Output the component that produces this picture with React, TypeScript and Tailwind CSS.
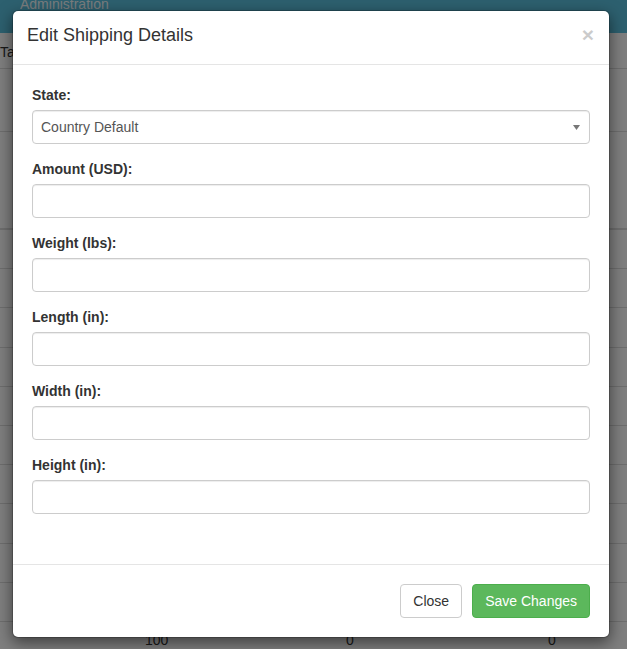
import React from "react";

const fields = ["Amount (USD):", "Weight (lbs):", "Length (in):", "Width (in):", "Height (in):"];

export default function App() {
  const rows = Array.from({ length: 10 });
  return (
    <div className="relative h-[649px] w-[627px] overflow-hidden bg-white font-['Liberation_Sans',Arial,sans-serif] text-[14px] leading-[20px] text-[#333]">
      {/* Underlying page */}
      <div className="flex h-[33px] items-start bg-[#5bc0de] pl-[20px]">
        <div className="-mt-[6px] text-white/95">Administration</div>
      </div>
      <div className="h-[36px] border-b border-[#dddddd] pt-[9px]">Tax Rates</div>
      <div className="h-[63px] border-b border-[#dddddd]" />
      <div className="h-[98px] border-b-2 border-[#dddddd]" />
      {rows.map((_, i) => (
        <div key={i} className="h-[39.2px] border-b border-[#dddddd]" />
      ))}
      <div className="grid grid-cols-[137px_201px_202px_1fr] pt-[8px]">
        <div />
        <div className="pl-[8px]">100</div>
        <div className="pl-[8px]">0</div>
        <div className="pl-[8px]">0</div>
      </div>

      {/* Backdrop */}
      <div className="absolute inset-0 bg-black/50" />

      {/* Modal */}
      <div className="absolute left-[12px] top-[10px] flex h-[628px] w-[598px] flex-col rounded-[6px] border border-black/20 bg-white bg-clip-padding shadow-[0_5px_15px_rgba(0,0,0,0.5)]">
        <div className="flex h-[54px] shrink-0 items-start justify-between border-b border-[#e5e5e5] pl-[14px] pr-[15px] pt-[12px]">
          <h4 className="text-[18px] font-normal leading-[25.7px] text-[#333]">Edit Shipping Details</h4>
          <span className="mt-[1px] text-[21px] font-bold leading-none text-black opacity-20">×</span>
        </div>

        <div className="h-[499px] shrink-0 px-[19px] pt-[20px]">
          <div className="mb-[15px]">
            <div className="mb-[5px] font-bold">State:</div>
            <div className="flex h-[34px] items-center justify-between rounded-[4px] border border-[#cccccc] pl-[8px] pr-[9px] text-[#555] shadow-[inset_0_1px_1px_rgba(0,0,0,0.075)]">
              <span>Country Default</span>
              <svg width="7" height="5" viewBox="0 0 7 5">
                <polygon points="0,0 7,0 3.5,5" fill="#777" />
              </svg>
            </div>
          </div>
          {fields.map((f) => (
            <div key={f} className="mb-[15px]">
              <div className="mb-[5px] font-bold">{f}</div>
              <div className="h-[34px] rounded-[4px] border border-[#cccccc] shadow-[inset_0_1px_1px_rgba(0,0,0,0.075)]" />
            </div>
          ))}
        </div>

        <div className="flex flex-1 items-start justify-end gap-[10px] border-t border-[#e5e5e5] pr-[19px] pt-[19px]">
          <button className="h-[34px] rounded-[4px] border border-[#cccccc] bg-white px-[12px] text-[14px] text-[#333]">
            Close
          </button>
          <button className="h-[34px] rounded-[4px] border border-[#4cae4c] bg-[#5cb85c] px-[12px] text-[14px] text-white">
            Save Changes
          </button>
        </div>
      </div>
    </div>
  );
}
